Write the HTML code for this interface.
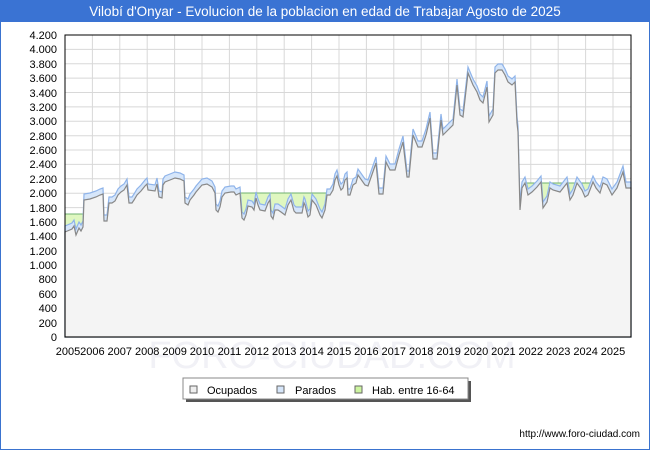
<!DOCTYPE html>
<html><head><meta charset="utf-8"><style>
body{margin:0;width:650px;height:450px;overflow:hidden;background:#fff;font-family:"Liberation Sans",sans-serif}
svg text{font-family:"Liberation Sans",sans-serif}
</style></head><body>
<svg width="650" height="450" xmlns="http://www.w3.org/2000/svg" style="position:absolute;left:0;top:0">
<rect x="0.5" y="0.5" width="649" height="449" fill="#fff" stroke="#3a73cf"/>
<rect x="0" y="0" width="650" height="22" fill="#3a73d3"/>
<text x="325" y="16" text-anchor="middle" fill="#fff" font-size="13.5">Vilobí d'Onyar - Evolucion de la poblacion en edad de Trabajar Agosto de 2025</text>
<text x="332" y="368" text-anchor="middle" fill="#f1f1f6" font-size="38">FORO-CIUDAD.COM</text>
<g stroke="#d8d8d8" stroke-width="1">
<line x1="65" x2="631" y1="49.4" y2="49.4"/><line x1="65" x2="631" y1="63.8" y2="63.8"/><line x1="65" x2="631" y1="78.1" y2="78.1"/><line x1="65" x2="631" y1="92.5" y2="92.5"/><line x1="65" x2="631" y1="106.9" y2="106.9"/><line x1="65" x2="631" y1="121.3" y2="121.3"/><line x1="65" x2="631" y1="135.7" y2="135.7"/><line x1="65" x2="631" y1="150" y2="150"/><line x1="65" x2="631" y1="164.4" y2="164.4"/><line x1="65" x2="631" y1="178.8" y2="178.8"/><line x1="65" x2="631" y1="193.2" y2="193.2"/><line x1="65" x2="631" y1="207.6" y2="207.6"/><line x1="65" x2="631" y1="222" y2="222"/><line x1="65" x2="631" y1="236.3" y2="236.3"/><line x1="65" x2="631" y1="250.7" y2="250.7"/><line x1="65" x2="631" y1="265.1" y2="265.1"/><line x1="65" x2="631" y1="279.5" y2="279.5"/><line x1="65" x2="631" y1="293.9" y2="293.9"/><line x1="65" x2="631" y1="308.2" y2="308.2"/><line x1="65" x2="631" y1="322.6" y2="322.6"/>
<line x1="92.4" x2="92.4" y1="35" y2="337"/><line x1="119.8" x2="119.8" y1="35" y2="337"/><line x1="147.2" x2="147.2" y1="35" y2="337"/><line x1="174.6" x2="174.6" y1="35" y2="337"/><line x1="202" x2="202" y1="35" y2="337"/><line x1="229.4" x2="229.4" y1="35" y2="337"/><line x1="256.8" x2="256.8" y1="35" y2="337"/><line x1="284.2" x2="284.2" y1="35" y2="337"/><line x1="311.6" x2="311.6" y1="35" y2="337"/><line x1="339" x2="339" y1="35" y2="337"/><line x1="366.4" x2="366.4" y1="35" y2="337"/><line x1="393.8" x2="393.8" y1="35" y2="337"/><line x1="421.2" x2="421.2" y1="35" y2="337"/><line x1="448.6" x2="448.6" y1="35" y2="337"/><line x1="476" x2="476" y1="35" y2="337"/><line x1="503.4" x2="503.4" y1="35" y2="337"/><line x1="530.8" x2="530.8" y1="35" y2="337"/><line x1="558.2" x2="558.2" y1="35" y2="337"/><line x1="585.6" x2="585.6" y1="35" y2="337"/><line x1="613" x2="613" y1="35" y2="337"/>
</g>
<polygon fill="#dff7c0" stroke="#6fb06f" points="65,214 84,214 86,230 128,230 129,204 134,204 135,230 240,230 240,193 330,193 331,230 520,230 522,183 590,183 592,230 631,230 631,337 65,337"/>
<g transform="translate(0,-6)"><polygon fill="#d6e6fa" stroke="#8fb4ea" stroke-width="1.2" points="65,232 72,229 74,226 76,235 79,228 81,231 83,227 84,200 90,199 96,197 100,195 103,194 104,221 107,221 109,203 112,203 115,201 118,195 121,192 124,190 127,185 129,203 132,203 134,200 137,195 141,191 145,186 147,184 148,190 155,191 157,184 159,197 162,198 163,185 165,182 170,180 175,178 180,179 184,181 185,203 188,205 190,200 194,195 196,192 202,185 207,184 212,187 215,193 216,210 218,212 220,207 222,197 225,193 231,192 234,192 236,195 240,193 242,218 244,220 246,215 248,206 252,207 254,210 256,198 258,205 260,210 265,211 268,203 270,200 271,216 273,219 275,210 278,210 281,212 285,215 288,205 291,200 294,211 296,213 302,213 304,203 305,205 308,217 310,215 312,200 316,205 320,215 322,218 325,210 327,195 330,195 333,190 335,180 337,176 339,185 341,190 343,188 345,180 347,178 348,195 350,195 353,185 356,183 358,175 365,185 368,186 376,163 379,194 383,194 386,162 390,170 395,170 399,155 403,142 407,177 409,177 413,135 418,147 422,147 426,135 430,118 433,159 437,159 441,120 443,135 448,130 453,125 457,85 460,115 463,117 468,73 473,85 477,92 480,100 483,103 487,87 489,122 493,115 495,73 498,70 502,70 505,75 508,82 512,85 515,82 517,123 518,132 520,210 522,188 525,183 528,195 532,192 537,187 541,182 543,208 547,202 550,188 553,190 560,192 567,183 570,200 573,195 577,183 582,190 585,197 588,195 593,182 596,188 600,193 603,183 607,185 612,195 617,188 623,172 626,188 631,188 631,343 65,343"/></g>
<polygon fill="#f4f4f4" stroke="#888" stroke-width="1.2" points="65,232 72,229 74,226 76,235 79,228 81,231 83,227 84,200 90,199 96,197 100,195 103,194 104,221 107,221 109,203 112,203 115,201 118,195 121,192 124,190 127,185 129,203 132,203 134,200 137,195 141,191 145,186 147,184 148,190 155,191 157,184 159,197 162,198 163,185 165,182 170,180 175,178 180,179 184,181 185,203 188,205 190,200 194,195 196,192 202,185 207,184 212,187 215,193 216,210 218,212 220,207 222,197 225,193 231,192 234,192 236,195 240,193 242,218 244,220 246,215 248,206 252,207 254,210 256,198 258,205 260,210 265,211 268,203 270,200 271,216 273,219 275,210 278,210 281,212 285,215 288,205 291,200 294,211 296,213 302,213 304,203 305,205 308,217 310,215 312,200 316,205 320,215 322,218 325,210 327,195 330,195 333,190 335,180 337,176 339,185 341,190 343,188 345,180 347,178 348,195 350,195 353,185 356,183 358,175 365,185 368,186 376,163 379,194 383,194 386,162 390,170 395,170 399,155 403,142 407,177 409,177 413,135 418,147 422,147 426,135 430,118 433,159 437,159 441,120 443,135 448,130 453,125 457,85 460,115 463,117 468,73 473,85 477,92 480,100 483,103 487,87 489,122 493,115 495,73 498,70 502,70 505,75 508,82 512,85 515,82 517,123 518,132 520,210 522,188 525,183 528,195 532,192 537,187 541,182 543,208 547,202 550,188 553,190 560,192 567,183 570,200 573,195 577,183 582,190 585,197 588,195 593,182 596,188 600,193 603,183 607,185 612,195 617,188 623,172 626,188 631,188 631,337 65,337"/>
<rect x="65" y="35" width="566" height="302" fill="none" stroke="#000" stroke-width="1"/>
<g font-size="11" fill="#000" text-anchor="end">
<text x="57" y="39">4.200</text><text x="57" y="53">4.000</text><text x="57" y="68">3.800</text><text x="57" y="82">3.600</text><text x="57" y="97">3.400</text><text x="57" y="111">3.200</text><text x="57" y="125">3.000</text><text x="57" y="140">2.800</text><text x="57" y="154">2.600</text><text x="57" y="168">2.400</text><text x="57" y="183">2.200</text><text x="57" y="197">2.000</text><text x="57" y="212">1.800</text><text x="57" y="226">1.600</text><text x="57" y="240">1.400</text><text x="57" y="255">1.200</text><text x="57" y="269">1.000</text><text x="57" y="283">800</text><text x="57" y="298">600</text><text x="57" y="312">400</text><text x="57" y="327">200</text><text x="57" y="341">0</text>
</g>
<g font-size="11" fill="#000" text-anchor="middle">
<text x="68" y="355">2005</text><text x="92.4" y="355">2006</text><text x="119.8" y="355">2007</text><text x="147.2" y="355">2008</text><text x="174.6" y="355">2009</text><text x="202" y="355">2010</text><text x="229.4" y="355">2011</text><text x="256.8" y="355">2012</text><text x="284.2" y="355">2013</text><text x="311.6" y="355">2014</text><text x="339" y="355">2015</text><text x="366.4" y="355">2016</text><text x="393.8" y="355">2017</text><text x="421.2" y="355">2018</text><text x="448.6" y="355">2019</text><text x="476" y="355">2020</text><text x="503.4" y="355">2021</text><text x="530.8" y="355">2022</text><text x="558.2" y="355">2023</text><text x="585.6" y="355">2024</text><text x="613" y="355">2025</text>
</g>
<rect x="186" y="381" width="285" height="21" fill="#555"/>
<rect x="183" y="378" width="285" height="21" fill="#fff" stroke="#888"/>
<rect x="190" y="386" width="7" height="7" fill="#eee" stroke="#666"/>
<text x="207" y="394" font-size="11">Ocupados</text>
<rect x="277" y="386" width="7" height="7" fill="#d6e6fa" stroke="#666"/>
<text x="295" y="394" font-size="11">Parados</text>
<rect x="355" y="386" width="7" height="7" fill="#cdf5a0" stroke="#666"/>
<text x="372" y="394" font-size="11">Hab. entre 16-64</text>
<text x="640" y="437" font-size="10" text-anchor="end">http://www.foro-ciudad.com</text>
</svg>
</body></html>
